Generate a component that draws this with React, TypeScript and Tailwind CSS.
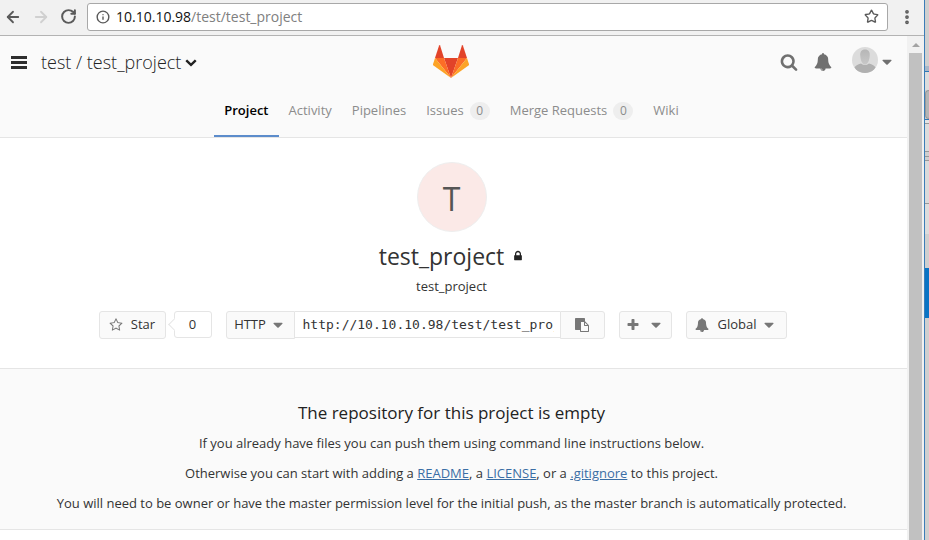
import React from 'react';
import { ArrowLeft, ArrowRight, RotateCw, Info, Star, EllipsisVertical } from 'lucide-react';

const PATHS = {
  caret: 'M1408 704q0 26-19 45l-448 448q-19 19-45 19t-45-19l-448-448q-19-19-19-45t19-45 45-19h896q26 0 45 19t19 45z',
  chevron: 'M1683 808l-742 741q-19 19-45 19t-45-19l-742-741q-19-19-19-45.500t19-45.500l166-165q19-19 45-19t45 19l531 531 531-531q19-19 45-19t45 19l166 165q19 19 19 45.500t-19 45.500z',
  search: 'M1216 832q0-185-131.500-316.500t-316.500-131.500-316.500 131.500-131.500 316.500 131.500 316.500 316.500 131.500 316.500-131.500 131.500-316.500zm512 832q0 52-38 90t-90 38q-54 0-90-38l-343-342q-179 124-399 124-143 0-273.500-55.500t-225-150-150-225-55.500-273.500 55.500-273.500 150-225 225-150 273.500-55.500 273.500 55.500 225 150 150 225 55.500 273.500q0 220-124 399l343 343q37 37 37 90z',
  bell: 'M912 1696q0-16-16-16-59 0-101.500-42.500t-42.500-101.500q0-16-16-16t-16 16q0 73 51.500 124.500t124.500 51.500q16 0 16-16zm816-288q0 52-38 90t-90 38h-448q0 106-75 181t-181 75-181-75-75-181h-448q-52 0-90-38t-38-90q50-42 91-88t85-119.500 74.500-158.500 50-206 19.500-260q0-152 117-282.500t307-158.500q-8-19-8-39 0-40 28-68t68-28 68 28 28 68q0 20-8 39 190 28 307 158.500t117 282.500q0 139 19.500 260t50 206 74.500 158.500 85 119.500 91 88z',
  star: 'M1201 1004l306-297-422-62-189-382-189 382-422 62 306 297-73 421 378-199 377 199zm527-357q0 22-26 48l-363 354 86 500q1 7 1 20 0 50-41 50-19 0-40-12l-449-236-449 236q-22 12-40 12-21 0-31.500-14.500t-10.500-35.500q0-6 2-20l86-500-364-354q-25-27-25-48 0-37 56-46l502-73 225-455q19-41 49-41t49 41l225 455 502 73q56 9 56 46z',
  plus: 'M1600 736v192q0 40-28 68t-68 28h-416v416q0 40-28 68t-68 28h-192q-40 0-68-28t-28-68v-416h-416q-40 0-68-28t-28-68v-192q0-40 28-68t68-28h416v-416q0-40 28-68t68-28h192q40 0 68 28t28 68v416h416q40 0 68 28t28 68z',
  lock: 'M640 768h512v-192q0-106-75-181t-181-75-181 75-75 181v192zm832 96v576q0 40-28 68t-68 28h-960q-40 0-68-28t-28-68v-576q0-40 28-68t68-28h32v-192q0-184 132-316t316-132 316 132 132 316v192h32q40 0 68 28t28 68z',
  paste: 'M768 1664h896v-640h-416q-40 0-68-28t-28-68v-416h-384v1152zm512-768h299l-299-299v299zm512 128v672q0 40-28 68t-68 28h-960q-40 0-68-28t-28-68v-160h-544q-40 0-68-28t-28-68v-1344q0-40 28-68t68-28h1088q40 0 68 28t28 68v328q21 13 36 28l408 408q28 28 48 76t20 88z',
};

function Icon({ name, className }: { name: keyof typeof PATHS; className: string }) {
  return (
    <svg viewBox="0 0 1792 1792" fill="currentColor" aria-hidden="true" className={`shrink-0 ${className}`}>
      <path d={PATHS[name]} />
    </svg>
  );
}

function BrowserBar() {
  return (
    <div className="flex h-9 items-center border-b border-[#b3b3b3] bg-[#f1f1f1] pr-2 pb-0.5 pl-1 text-[#5a5a5a]">
      <button aria-label="Back" className="mr-2.5"><ArrowLeft size={18} strokeWidth={2.4} /></button>
      <button aria-label="Forward" className="mr-2.5 text-[#d0d0d0]"><ArrowRight size={18} strokeWidth={2.4} /></button>
      <button aria-label="Reload" className="mr-2.5"><RotateCw size={17} strokeWidth={2.8} /></button>
      <div className="flex h-7 flex-1 items-center rounded-[3px] border border-[#a8a8a8] bg-white px-2">
        <Info size={14} strokeWidth={2.4} />
        <a href="#url" className="ml-1.5 flex-1 text-sm text-[#808080]">
          <span className="text-[#111]">10.10.10.98</span>/test/test_project
        </a>
        <button aria-label="Bookmark"><Star size={15} strokeWidth={2.2} /></button>
      </div>
      <button aria-label="Menu" className="ml-2.5"><EllipsisVertical size={18} strokeWidth={3} /></button>
    </div>
  );
}

function Logo() {
  return (
    <svg viewBox="0 0 36 33" className="h-[33px] w-9" role="img" aria-label="GitLab">
      <path fill="#e24329" d="M18 33 25 13H11z" />
      <path fill="#fc6d26" d="M18 33 11 13H2z" />
      <path fill="#fca326" d="M2 13 0 19.200q-.2.900.5 1.400L18 33z" />
      <path fill="#e24329" d="M2 13h9L7.100.5q-.5-1-1 0z" />
      <path fill="#fc6d26" d="M18 33 25 13H34z" />
      <path fill="#fca326" d="m34 13 2 6.200q.2.900-.5 1.400L18 33z" />
      <path fill="#e24329" d="M34 13h-9L28.900.5q.5-1 1 0z" />
    </svg>
  );
}

function Avatar() {
  return (
    <svg viewBox="0 0 26 26" className="mb-1 size-[26px]" role="img" aria-label="User">
      <defs>
        <clipPath id="face"><circle cx="13" cy="13" r="13" /></clipPath>
        <linearGradient id="skin" x1="0" y1="0" x2="0" y2="1">
          <stop offset="0" stopColor="#b6b6b6" />
          <stop offset="1" stopColor="#c8c8c8" />
        </linearGradient>
      </defs>
      <g clipPath="url(#face)">
        <rect width="26" height="26" fill="#dcdcdc" />
        <path fill="url(#skin)" d="M13 2.500c3.500 0 5.200 2.500 4.700 6.500-.3 4-1.700 8.500-4.700 8.500S8.600 13 8.300 9C7.800 5 9.500 2.500 13 2.500z" />
        <path fill="#b0b0b0" d="M2 21q2-3.500 7-4.500 4 3 8 0 5 1 7 4.500l-4 5H6z" />
      </g>
    </svg>
  );
}

const TABS = [
  { label: 'Project', active: true },
  { label: 'Activity' },
  { label: 'Pipelines' },
  { label: 'Issues', count: 0 },
  { label: 'Merge Requests', count: 0 },
  { label: 'Wiki' },
];

function Header() {
  return (
    <header className="border-b border-[#e5e5e5] bg-[#fafafa]">
      <div className="grid h-[50px] grid-cols-[1fr_36px_1fr] items-center pr-4 pl-[11px]">
        <div className="flex items-center pt-0.5">
          <button aria-label="Navigation" className="flex w-4 flex-col gap-0.5">
            <span className="h-[3px] bg-[#2e2e2e]" />
            <span className="h-[3px] bg-[#2e2e2e]" />
            <span className="h-[3px] bg-[#2e2e2e]" />
          </button>
          <h1 className="ml-3.5 text-lg font-light text-[#222]">
            <a href="#test">test</a> / <a href="#project">test_project</a>
          </h1>
          <Icon name="chevron" className="ml-1 size-3 text-[#222]" />
        </div>
        <Logo />
        <div className="-mr-1 flex items-center justify-end pt-0.5 text-[#707070]">
          <button aria-label="Search"><Icon name="search" className="size-[18px]" /></button>
          <button aria-label="Notifications" className="ml-4"><Icon name="bell" className="size-[18px]" /></button>
          <button className="ml-5 flex items-center gap-px" aria-label="Account">
            <Avatar />
            <Icon name="caret" className="size-4" />
          </button>
        </div>
      </div>
      <nav className="flex h-[51px] justify-center pr-1 text-[13px]">
        {TABS.map((t) => (
          <a
            key={t.label}
            href={'#' + t.label}
            className={
              t.active
                ? 'flex items-center border-b-2 border-[#5c8ccb] px-2.5 font-semibold text-black'
                : 'flex items-center border-b-2 border-transparent px-2.5 text-[#8c8c8c]'
            }
          >
            {t.label}
            {t.count !== undefined && (
              <span className="ml-1.5 w-5 rounded-full bg-[#eee] text-center text-xs leading-[18px]">{t.count}</span>
            )}
          </a>
        ))}
      </nav>
    </header>
  );
}

const BTN = 'flex h-7 items-center justify-center rounded-[3px] border border-[#e5e5e5] bg-[#fafafa]';

function ProjectHome() {
  return (
    <section className="flex flex-col items-center pt-6 pb-[29px] text-[#333]">
      <div className="flex size-[70px] items-center justify-center rounded-full border border-[#eee] bg-[#fbe9e7] pt-1 text-[32px] text-[#555]">T</div>
      <h2 className="mt-2 flex items-center gap-2 text-[23px] leading-8">
        test_project <Icon name="lock" className="size-3 text-[#222]" />
      </h2>
      <p className="mt-1 text-[13px] leading-5">test_project</p>
      <div className="mt-[15px] mr-[18px] flex text-[13px]">
        <button className={`${BTN} w-[67px] gap-2`}>
          <Icon name="star" className="size-3.5 text-[#777]" />Star
        </button>
        <div className="relative ml-2 flex h-[27px] w-[38px] items-center justify-center rounded-[3px] border border-[#e5e5e5] bg-white">
          <span className="absolute top-2 -left-[5px] size-[9px] rotate-45 border-b border-l border-[#e5e5e5] bg-white" />
          0
        </div>
        <button className={`${BTN} ml-3.5 w-[69px] gap-1 rounded-r-none`}>
          HTTP <Icon name="caret" className="size-4 text-[#777]" />
        </button>
        <input
          aria-label="Project clone URL"
          readOnly
          value="http://10.10.10.98/test/test_project.git"
          className="h-[27px] w-[265px] border-y border-[#e5e5e5] bg-white pr-1.5 pl-2 font-['DejaVu_Sans_Mono',monospace] text-[13px] outline-none"
        />
        <button aria-label="Copy URL" className={`${BTN} w-[45px] rounded-l-none text-[#777]`}>
          <Icon name="paste" className="size-3.5" />
        </button>
        <button aria-label="Create new" className={`${BTN} ml-3.5 w-[53px] gap-2 text-[#777]`}>
          <Icon name="plus" className="size-3.5" />
          <Icon name="caret" className="size-4" />
        </button>
        <button className={`${BTN} ml-3.5 w-[101px] gap-1`}>
          <Icon name="bell" className="mr-1 size-3.5 text-[#777]" />Global
          <Icon name="caret" className="size-4 text-[#777]" />
        </button>
      </div>
    </section>
  );
}

const LINK = 'text-[#3a6ea5] underline';

function EmptyNotice() {
  return (
    <section className="border-y border-[#e5e5e5] bg-[#fafafa] pt-8 pb-[11px] text-center text-[13px] text-[#333]">
      <h3 className="mb-[3px] text-[17px] leading-6 font-medium text-[#222]">The repository for this project is empty</h3>
      <p className="leading-[30px]">If you already have files you can push them using command line instructions below.</p>
      <p className="leading-[30px]">
        Otherwise you can start with adding a <a href="#readme" className={LINK}>README</a>, a{' '}
        <a href="#license" className={LINK}>LICENSE</a>, or a <a href="#gitignore" className={LINK}>.gitignore</a> to this project.
      </p>
      <p className="leading-[30px]">
        You will need to be owner or have the master permission level for the initial push, as the master branch is automatically protected.
      </p>
    </section>
  );
}

function DesktopEdge() {
  return (
    <div className="flex w-[5px] shrink-0 flex-col border-l border-[#3b7db8] bg-[#cfcfcf]">
      <div className="h-[66px]" />
      <div className="h-[5px] bg-[#a9b8c9]" />
      <div className="h-[19px] border-t border-[#2f78b5] bg-[#dcdcdc]" />
      <div className="h-[29px] rounded-l-md border border-r-0 border-[#999] bg-[#b5b5b5]" />
      <div className="h-1 border-t border-[#2f78b5] bg-[#e5e5e5]" />
      <div className="h-7 border-t border-[#999] bg-[#dcdcdc]" />
      <div className="h-[5px] border-t border-[#999]" />
      <div className="h-[5px] border-y border-[#999]" />
      <div className="h-[43px] border-b border-[#999] bg-[#dadada]" />
      <div className="h-[30px] bg-[#dcdcdc]" />
      <div className="h-[34px]" />
      <div className="h-[50px] bg-[#0a74c4]" />
    </div>
  );
}

export default function App() {
  return (
    <div className="flex min-h-screen bg-white font-['Open_Sans','Noto_Sans',sans-serif]">
      <div className="flex min-w-0 flex-1 flex-col">
        <BrowserBar />
        <div className="flex flex-1">
          <main className="min-w-0 flex-1">
            <Header />
            <div className="[&>section]:pr-1">
              <ProjectHome />
              <EmptyNotice />
            </div>
          </main>
          <div className="flex w-[17px] shrink-0 flex-col items-center bg-[#f1f1f1]">
            <div className="flex h-[17px] items-center">
              <span className="border-x-4 border-b-4 border-x-transparent border-b-[#a3a3a3]" />
            </div>
            <div className="w-[13px] flex-1 bg-[#c1c1c1]" />
          </div>
        </div>
      </div>
      <DesktopEdge />
    </div>
  );
}
